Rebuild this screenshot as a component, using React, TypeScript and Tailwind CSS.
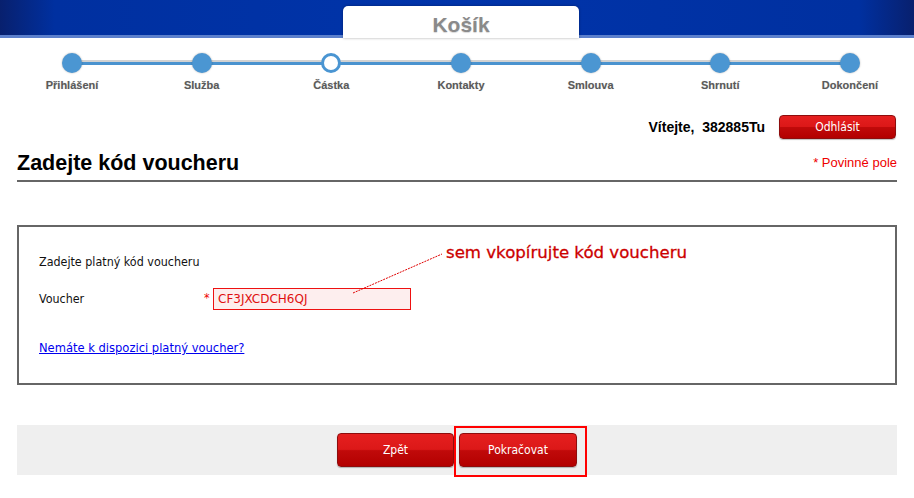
import React from "react";

const steps = [
  { label: "Přihlášení", active: false },
  { label: "Služba", active: false },
  { label: "Částka", active: true },
  { label: "Kontakty", active: false },
  { label: "Smlouva", active: false },
  { label: "Shrnutí", active: false },
  { label: "Dokončení", active: false },
];

function RedButton({ children, className }: { children: React.ReactNode; className: string }) {
  return (
    <button
      className={
        "flex items-center justify-center rounded-[4px] border border-[#8e0d0d] bg-[linear-gradient(to_bottom,#e51f1f_0%,#dc1818_48%,#c00a0a_52%,#b30000_100%)] text-white font-['DejaVu_Sans_Condensed','DejaVu_Sans',sans-serif] text-[12px] shadow-[0_1px_1px_rgba(0,0,0,0.25)] " +
        className
      }
    >
      {children}
    </button>
  );
}

export default function App() {
  return (
    <div className="relative w-[914px] h-[498px] bg-white overflow-hidden font-['Liberation_Sans',Arial,sans-serif]">
      {/* Header */}
      <div className="h-[38px] flex items-end bg-[linear-gradient(to_right,#08206e_0%,#0030a0_6%,#0034aa_50%,#0030a0_94%,#08206e_100%)] shadow-[inset_0_-3px_0_#5c80cc,inset_0_-1px_0_#9fb4e0]">
        <div className="ml-[343px] w-[236px] h-[32px] bg-white rounded-t-[5px] flex items-center justify-center pt-[6px] shadow-[0_0_3px_rgba(0,0,0,0.35)]">
          <span className="text-[21px] leading-[24px] font-bold text-[#8a8a8a] [text-shadow:0_1px_1px_rgba(0,0,0,0.15)]">Košík</span>
        </div>
      </div>

      {/* Progress */}
      <div className="relative mt-[15px] h-[38px]">
        <div className="absolute left-[72px] top-[7px] w-[778px]">
          <div className="h-[2px] bg-[#d2d2d2]" />
          <div className="h-[3px] bg-[#4a93cf]" />
        </div>
        <div className="relative ml-[42px] w-[838px] flex justify-between">
          {steps.map((s) => (
            <div key={s.label} className="w-[60px] flex flex-col items-center">
              {s.active ? (
                <div className="w-[20px] h-[20px] rounded-full bg-white border-[3px] border-[#4a95d2]" />
              ) : (
                <div className="w-[20px] h-[20px] rounded-full bg-[#4b96d2] shadow-[0_0_2px_rgba(0,0,0,0.3)]" />
              )}
              <div className="mt-[6px] h-[13px] leading-[13px] text-[11px] font-bold text-[#5a5a5a] whitespace-nowrap [text-shadow:0_0_1px_rgba(0,0,0,0.2)]">
                {s.label}
              </div>
            </div>
          ))}
        </div>
      </div>

      {/* Welcome row */}
      <div className="mt-[24px] flex justify-end items-center pr-[18px] gap-[14px]">
        <span className="text-[14px] font-bold text-black whitespace-pre">Vítejte,  382885Tu</span>
        <RedButton className="w-[117px] h-[24px] rounded-[3px]">Odhlásit</RedButton>
      </div>

      {/* Heading */}
      <div className="mt-[13px] mx-[17px] flex justify-between items-start border-b-2 border-[#666666] pb-[5px]">
        <h1 className="text-[21.5px] leading-[23px] font-bold text-black">Zadejte kód voucheru</h1>
        <span className="mt-[3px] text-[13px] leading-[15px] text-[#ee0000]">* Povinné pole</span>
      </div>

      {/* Box */}
      <div className="mt-[43px] mx-[17px] h-[160px] border-2 border-[#666666] pl-[20px] pt-[27px] font-['DejaVu_Sans_Condensed','DejaVu_Sans',sans-serif] text-[12.4px] text-[#111]">
        <div className="h-[15px] leading-[15px]">Zadejte platný kód voucheru</div>
        <div className="mt-[19px] flex items-center h-[22px]">
          <span className="w-[165px]">Voucher</span>
          <span className="w-[9px] text-[#ee0000] leading-[15px] self-start mt-[2px]">*</span>
          <div className="w-[198px] h-[22px] border border-[#ee1111] bg-[#fdeeee] flex items-center pl-[4px] text-[12px] text-[#e01010] font-['DejaVu_Sans',sans-serif]">
            CF3JXCDCH6QJ
          </div>
        </div>
        <a href="#" className="mt-[30px] block w-fit leading-[15px] text-[12.8px] text-[#0000ee] underline">
          Nemáte k dispozici platný voucher?
        </a>
      </div>

      {/* Footer */}
      <div className="mt-[40px] mx-[17px] h-[50px] bg-[#efefef] flex justify-center items-center gap-[5px]">
        <RedButton className="w-[117px] h-[34px]">Zpět</RedButton>
        <div className="relative">
          <RedButton className="w-[118px] h-[34px]">Pokračovat</RedButton>
          <div className="absolute -left-[5px] -top-[7px] w-[133px] h-[51px] border-2 border-[#ff0000]" />
        </div>
      </div>

      {/* Annotation */}
      <svg className="absolute left-0 top-0 pointer-events-none" width="914" height="498">
        <line x1="353" y1="293" x2="442" y2="254" stroke="#e00000" strokeWidth="1" strokeDasharray="2 1" />
      </svg>
      <div className="absolute left-[446px] top-[243px] text-[16.6px] leading-[20px] text-[#cc0000] font-['DejaVu_Sans',sans-serif] whitespace-nowrap [-webkit-text-stroke:0.3px_#cc0000]">
        sem vkopírujte kód voucheru
      </div>
    </div>
  );
}
